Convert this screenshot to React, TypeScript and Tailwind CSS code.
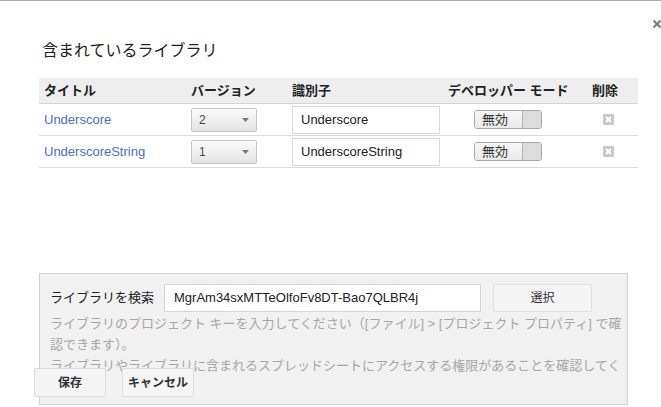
import React from 'react';

type LibraryRow = {
  title: string;
  version: string;
  identifier: string;
};

const rows: LibraryRow[] = [
  { title: 'Underscore', version: '2', identifier: 'Underscore' },
  { title: 'UnderscoreString', version: '1', identifier: 'UnderscoreString' },
];

const cols = 'grid grid-cols-[147px_101px_156px_144px_51px]';

function VersionSelect({ value }: { value: string }) {
  return (
    <div className="flex h-[24px] w-[66px] items-center justify-between rounded-[2px] border border-[#c4c4c4] bg-linear-to-b from-[#fbfbfb] to-[#e3e3e3] pl-[7px] pr-[7px] text-[12px] text-[#444]">
      <span>{value}</span>
      <svg width="7" height="4" viewBox="0 0 7 4">
        <path d="M0 0h7L3.5 4z" fill="#7a7a7a" />
      </svg>
    </div>
  );
}

function DevToggle() {
  return (
    <div className="flex h-[19px] w-[68px] overflow-hidden rounded-[3px] border border-[#a9a9a9] text-[13px] text-[#333]">
      <div className="flex flex-1 items-center bg-linear-to-b from-[#f7f7f7] to-[#e9e9e9] pl-[7px]">無効</div>
      <div className="w-[19px] border-l border-[#b5b5b5] bg-[#dcdcdc]" />
    </div>
  );
}

function DeleteIcon() {
  return (
    <svg width="11" height="11" viewBox="0 0 11 11">
      <rect width="11" height="11" rx="1" fill="#c9c9c9" />
      <path d="M3 3l5 5M8 3l-5 5" stroke="#fff" strokeWidth="1.8" />
    </svg>
  );
}

export default function App() {
  return (
    <div className="relative h-[407px] w-[661px] overflow-hidden border-t border-[#ababab] bg-white font-['Liberation_Sans','Noto_Sans_CJK_JP',sans-serif] text-[#222]">
      <svg className="absolute left-[652px] top-[18px]" width="10" height="10" viewBox="0 0 10 10">
        <path d="M1.5 1.5l7 7M8.5 1.5l-7 7" stroke="#808080" strokeWidth="2.2" />
      </svg>

      <h1 className="ml-[42px] mt-[40px] text-[16px] leading-[20px] font-normal text-[#222]">含まれているライブラリ</h1>

      <div className="ml-[39px] mt-[17px] w-[599px]">
        <div className={`${cols} h-[26px] items-center border-b border-[#d4d4d4] bg-[#eeeeee] text-[13px] font-bold text-[#222]`}>
          <div className="pl-[5px]">タイトル</div>
          <div className="pl-[5px]">バージョン</div>
          <div className="pl-[5px]">識別子</div>
          <div className="pl-[5px]">デベロッパー モード</div>
          <div className="pl-[5px]">削除</div>
        </div>
        {rows.map((row) => (
          <div key={row.title} className={`${cols} h-[32px] items-center border-b border-[#dcdcdc] text-[13px]`}>
            <div className="pl-[5px] text-[#4a6fcb]">{row.title}</div>
            <div className="pl-[5px]">
              <VersionSelect value={row.version} />
            </div>
            <div className="pl-[5px]">
              <div className="flex h-[28px] w-[148px] items-center border border-[#d9d9d9] bg-white pl-[8px] text-[13px] text-[#222]">
                {row.identifier}
              </div>
            </div>
            <div className="pl-[31px]">
              <DevToggle />
            </div>
            <div className="flex pl-[16px]">
              <DeleteIcon />
            </div>
          </div>
        ))}
      </div>

      <div className="ml-[39px] mt-[105px] h-[132px] w-[589px] overflow-hidden border border-[#d2d2d2] bg-[#f1f1f1] pl-[10px] pt-[10px]">
        <div className="flex items-center">
          <label className="w-[114px] text-[13px] text-[#222]">ライブラリを検索</label>
          <div className="flex h-[28px] w-[317px] items-center border border-[#d4d4d4] bg-white pl-[9px] text-[13px] text-[#222]">
            MgrAm34sxMTTeOlfoFv8DT-Bao7QLBR4j
          </div>
          <button className="ml-[12px] h-[28px] w-[99px] rounded-[2px] border border-[#dedede] bg-[#f5f5f5] text-[12px] text-[#333]">
            選択
          </button>
        </div>
        <div className="mt-[1px] text-[13px] leading-[21px] whitespace-nowrap text-[#a6a6a6]">
          <div>ライブラリのプロジェクト キーを入力してください（[ファイル] &gt; [プロジェクト プロパティ] で確</div>
          <div>認できます）。</div>
          <div>ライブラリやライブラリに含まれるスプレッドシートにアクセスする権限があることを確認してく</div>
        </div>
      </div>

      <div className="absolute left-[34px] top-[367px] flex gap-[16px]">
        <button className="h-[29px] w-[72px] rounded-[2px] border border-[#dcdcdc] bg-[#f5f5f5] text-[12px] font-bold text-[#333]">
          保存
        </button>
        <button className="h-[29px] w-[72px] rounded-[2px] border border-[#dcdcdc] bg-[#f5f5f5] text-[12px] font-bold text-[#333]">
          キャンセル
        </button>
      </div>
    </div>
  );
}
